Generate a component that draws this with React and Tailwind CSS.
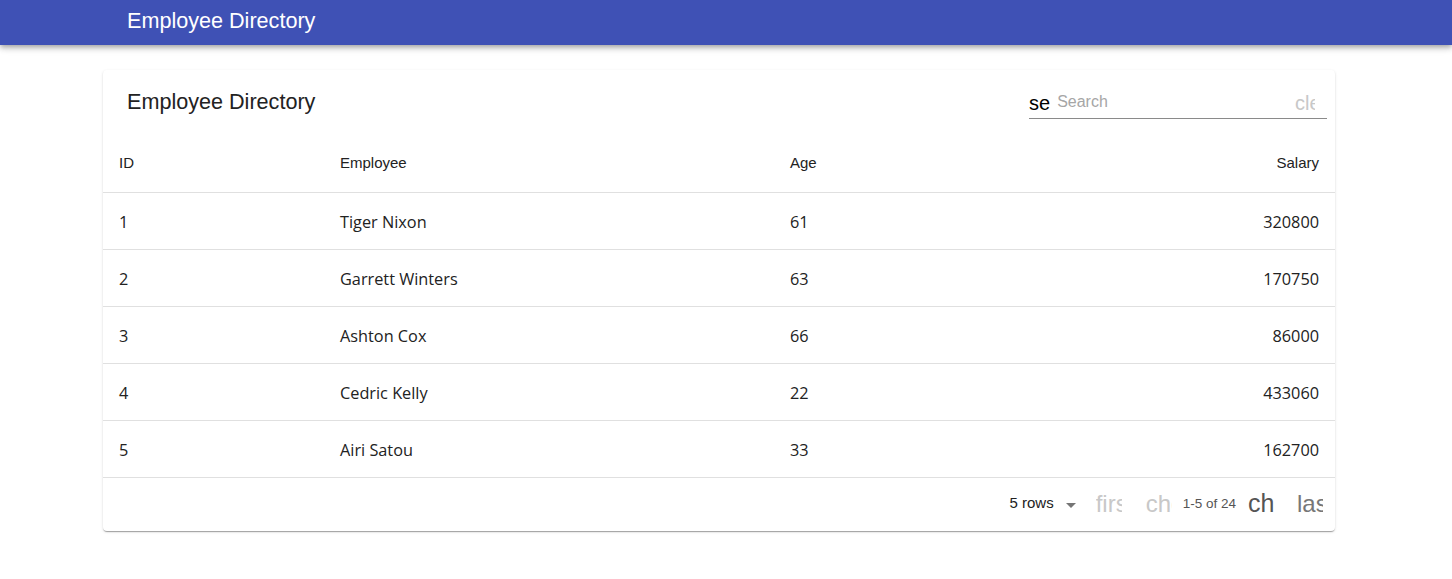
import React from 'react';

const rows = [
  { id: 1, name: 'Tiger Nixon', age: 61, salary: 320800 },
  { id: 2, name: 'Garrett Winters', age: 63, salary: 170750 },
  { id: 3, name: 'Ashton Cox', age: 66, salary: 86000 },
  { id: 4, name: 'Cedric Kelly', age: 22, salary: 433060 },
  { id: 5, name: 'Airi Satou', age: 33, salary: 162700 },
];

const arial = "font-['Liberation_Sans',Arial,sans-serif]";
const body = "font-['Open_Sans','Liberation_Sans',sans-serif]";

export default function App() {
  return (
    <div className={`min-h-screen bg-white ${arial}`}>
      <header className="h-[45px] bg-[#3f51b5] text-white flex items-center px-[127px] shadow-[0_2px_4px_-1px_rgba(0,0,0,0.2),0_4px_5px_0_rgba(0,0,0,0.14),0_1px_10px_0_rgba(0,0,0,0.12)]">
        <h1 className="text-[21.6px] leading-none -mt-[3px]">Employee Directory</h1>
      </header>

      <main className="pt-[25px] pl-[103px]">
        <div className="w-[1232px] bg-white rounded-[4px] shadow-[0_2px_1px_-1px_rgba(0,0,0,0.2),0_1px_1px_0_rgba(0,0,0,0.14),0_1px_3px_0_rgba(0,0,0,0.12)]">
          {/* toolbar */}
          <div className="h-[64px] flex items-center pl-[24px] pr-[8px]">
            <h2 className="text-[21.6px] text-[#222] flex-1">Employee Directory</h2>
            <div className="w-[298px] h-[32px] mt-[1px] flex items-center border-b border-[#8a8a8a]">
              <span className="text-[20px] text-black leading-none mt-[1px]">se</span>
              <span className="ml-[7px] text-[16px] text-[#a6a6a6] flex-1 -mt-[1px]">Search</span>
              <span className="w-[20px] overflow-hidden whitespace-nowrap text-[20px] text-[#c8c8c8] mr-[12px] mt-[1px]">clear</span>
            </div>
          </div>

          {/* table */}
          <table className="w-full border-collapse">
            <thead>
              <tr className="h-[58px] border-b border-[#e0e0e0] text-[15px] text-[#222]">
                <th className="text-left font-normal pl-[16px] w-[237px] pt-[1px]">ID</th>
                <th className="text-left font-normal w-[450px] pt-[1px]">Employee</th>
                <th className="text-left font-normal pt-[1px]">Age</th>
                <th className="text-right font-normal pr-[16px] pt-[1px]">Salary</th>
              </tr>
            </thead>
            <tbody className={`${body} text-[16.3px] text-[#222]`}>
              {rows.map((r) => (
                <tr key={r.id} className="h-[57px] border-b border-[#e0e0e0]">
                  <td className="pl-[16px] pt-[3px]">{r.id}</td>
                  <td className="pt-[3px]">{r.name}</td>
                  <td className="pt-[3px]">{r.age}</td>
                  <td className="text-right pr-[16px] pt-[3px]">{r.salary}</td>
                </tr>
              ))}
            </tbody>
          </table>

          {/* pagination */}
          <div className="h-[53px] flex items-center justify-end pr-[12px]">
            <span className="text-[15px] text-[#222] -mt-[2px]">5 rows</span>
            <svg width="10" height="5" viewBox="0 0 10 5" className="ml-[12px] mt-[2px]">
              <path d="M0 0 L10 0 L5 5 Z" fill="#757575" />
            </svg>
            <span className="ml-[20px] w-[26px] overflow-hidden whitespace-nowrap text-[24px] text-[#c8c8c8]">first_page</span>
            <span className="ml-[24px] w-[26px] overflow-hidden whitespace-nowrap text-[24px] text-[#c8c8c8]">chevron_left</span>
            <span className="ml-[11px] text-[13.5px] text-[#555]">1-5 of 24</span>
            <span className="ml-[12px] w-[26px] overflow-hidden whitespace-nowrap text-[25px] text-[#555]">chevron_right</span>
            <span className="ml-[23px] w-[26px] overflow-hidden whitespace-nowrap text-[24px] text-[#777]">last_page</span>
          </div>
        </div>
      </main>
    </div>
  );
}
